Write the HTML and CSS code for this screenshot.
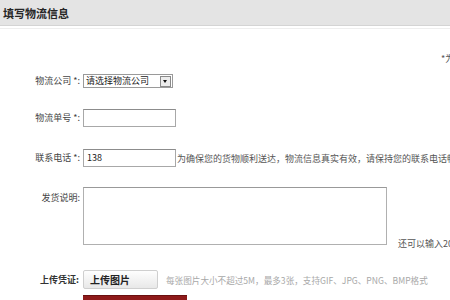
FILE: index.html
```html
<!DOCTYPE html>
<html lang="zh">
<head>
<meta charset="utf-8">
<title>填写物流信息</title>
<link rel="stylesheet" href="styles.css">
</head>
<body>
<div class="page">
  <div class="header"><span class="title">填写物流信息</span></div>
  <div class="subline"></div>
  <div class="note">*为必填项</div>
  <div class="form">
    <div class="row r1">
      <label class="label">物流公司 *:</label>
      <div class="select"><span class="select-text">请选择物流公司</span><span class="arrow"></span></div>
    </div>
    <div class="row r2">
      <label class="label">物流单号 *:</label>
      <div class="input"></div>
    </div>
    <div class="row r3">
      <label class="label">联系电话 *:</label>
      <div class="input">138</div>
      <span class="hint">为确保您的货物顺利送达，物流信息真实有效，请保持您的联系电话畅通。</span>
    </div>
    <div class="row r4">
      <label class="label label-top">发货说明:</label>
      <div class="textarea"></div>
      <span class="counter">还可以输入200字</span>
    </div>
    <div class="row r5">
      <label class="label label-bold">上传凭证:</label>
      <div class="button">上传图片</div>
      <span class="hint-light">每张图片大小不超过5M，最多3张，支持GIF、JPG、PNG、BMP格式</span>
    </div>
    <div class="submit"></div>
  </div>
</div>
</body>
</html>
```
FILE: styles.css
```css
html, body {
  margin: 0;
  padding: 0;
  background: #ffffff;
}
body {
  width: 450px;
  height: 300px;
  overflow: hidden;
  font-family: "Noto Sans CJK SC", "DejaVu Sans", sans-serif;
  font-size: 9px;
  color: #3a3a3a;
}
.page {
  width: 450px;
  white-space: nowrap;
}
.header {
  height: 25px;
  background: #e4e4e4;
  border-bottom: 1px solid #d4d4d4;
  display: flex;
  align-items: center;
  padding-left: 3px;
}
.title {
  font-size: 11px;
  font-weight: bold;
  color: #262626;
  line-height: 14px;
}
.subline {
  margin-top: 2px;
  height: 1px;
  background: #eeeeee;
}
.note {
  margin-top: 24px;
  padding-left: 441px;
  line-height: 12px;
  height: 12px;
  color: #555;
}
.form {
  display: flex;
  flex-direction: column;
}
.row {
  display: flex;
  align-items: center;
}
.r1 { margin-top: 9px; height: 14px; }
.r2 { margin-top: 21px; height: 18px; }
.r3 { margin-top: 22px; height: 18px; }
.r4 { margin-top: 20px; height: 58px; align-items: flex-start; }
.r5 { margin-top: 25px; height: 19px; }
.label {
  width: 80px;
  text-align: right;
  line-height: 12px;
  color: #444;
  flex: none;
}
.label-top {
  margin-top: 5px;
}
.label-bold {
  font-weight: bold;
  color: #333;
  width: 79px;
  padding-right: 1px;
}
.select {
  margin-left: 3px;
  width: 86px;
  height: 12px;
  border: 1px solid #9a9a9a;
  display: flex;
  align-items: center;
  justify-content: space-between;
  padding-left: 2px;
  box-sizing: content-box;
  background: #fff;
  flex: none;
}
.select-text {
  color: #222;
  line-height: 12px;
}
.arrow {
  width: 9px;
  height: 9px;
  border: 1px solid #8a8a8a;
  background: #ececec;
  margin-right: 1px;
  position: relative;
}
.arrow::after {
  content: "";
  position: absolute;
  left: 2px;
  top: 3px;
  border-left: 2.5px solid transparent;
  border-right: 2.5px solid transparent;
  border-top: 3px solid #111;
}
.input {
  margin-left: 3px;
  width: 88px;
  height: 16px;
  border: 1px solid #a8a8a8;
  border-top-color: #8c8c8c;
  padding-left: 3px;
  line-height: 16px;
  color: #222;
  background: #fff;
  flex: none;
}
.hint {
  margin-left: 1px;
  color: #555;
}
.textarea {
  margin-left: 3px;
  width: 302px;
  height: 56px;
  border: 1px solid #b0b0b0;
  border-top-color: #999;
  background: #fff;
  flex: none;
}
.counter {
  align-self: flex-end;
  margin-left: 11px;
  margin-bottom: -5px;
  color: #555;
  line-height: 12px;
}
.button {
  margin-left: 3px;
  width: 67px;
  height: 17px;
  border: 1px solid #cfcfcf;
  border-radius: 2px;
  background: linear-gradient(#fefefe, #e8e8e8);
  padding-left: 6px;
  font-size: 10px;
  font-weight: bold;
  color: #222;
  line-height: 17px;
  flex: none;
}
.hint-light {
  margin-left: 8px;
  font-size: 8.6px;
  color: #a8a8a8;
}
.submit {
  margin-top: 6px;
  margin-left: 83px;
  width: 104px;
  height: 10px;
  background: #8e1a1a;
  border-top: 1px solid #6a1010;
}
```
